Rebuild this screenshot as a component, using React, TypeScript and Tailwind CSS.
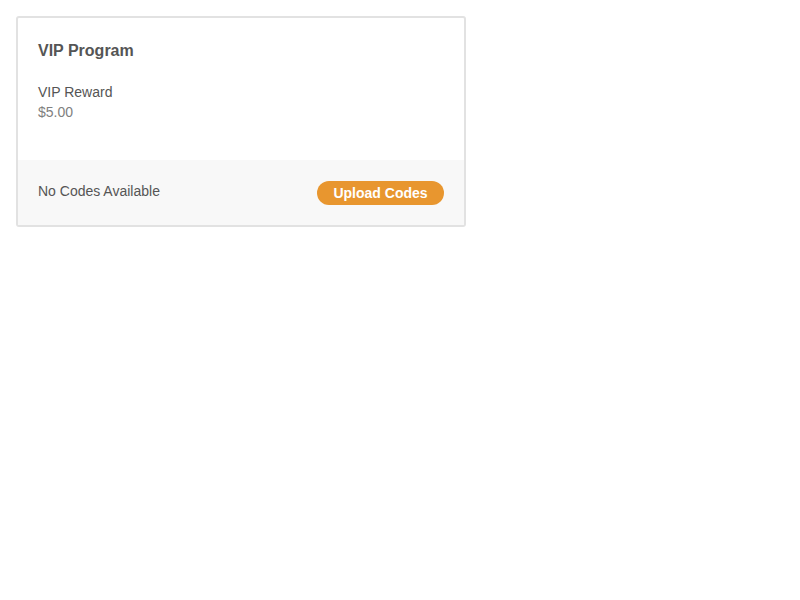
export default function App() {
  return (
    <div className="p-4 font-['Liberation_Sans',Arial,sans-serif]">
      <div className="w-[450px] border-2 border-[#e2e2e2] rounded-[3px] bg-white overflow-hidden">
        {/* Program details */}
        <div className="px-5 pt-[23px] pb-[38px]">
          <h2 className="text-[16px] leading-[20px] font-bold text-[#555]">VIP Program</h2>
          <div className="mt-[21px] text-[14px] leading-[20px]">
            <div className="text-[#555]">VIP Reward</div>
            <div className="text-[#808080]">$5.00</div>
          </div>
        </div>

        {/* Codes footer */}
        <div className="h-[65px] bg-[#f8f8f8] px-5 flex items-center justify-between">
          <span className="text-[14px] text-[#555] -mt-[2px]">No Codes Available</span>
          <button className="h-6 w-[127px] rounded-full bg-[#e8962f] text-white text-[14px] font-bold pt-px">
            Upload Codes
          </button>
        </div>
      </div>
    </div>
  )
}
